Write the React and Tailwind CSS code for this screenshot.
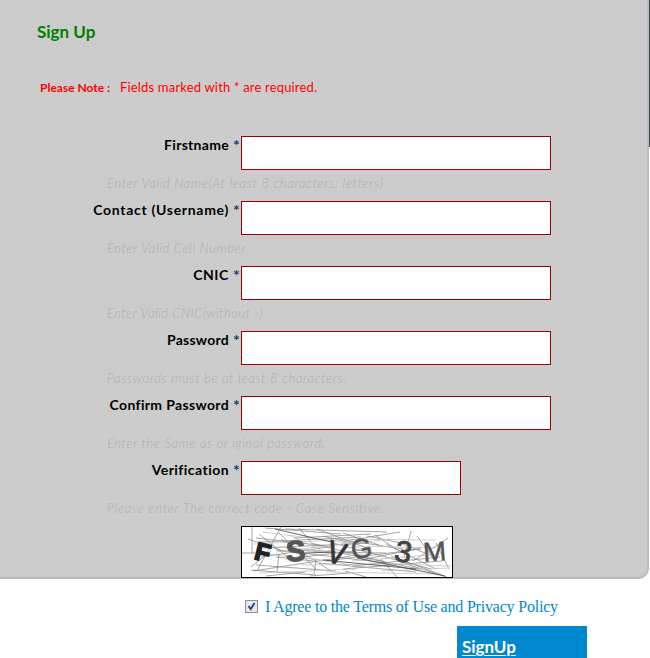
const fields = [
  { label: 'Firstname', hint: 'Enter Valid Name(At least 8 characters: letters)', lt: 'tracking-[0.3px]', ht: 'tracking-[0.64px]', w: 'w-[310px]' },
  { label: 'Contact (Username)', hint: 'Enter Valid Cell Number', lt: 'tracking-[0.7px]', ht: 'tracking-[0.6px]', w: 'w-[310px]' },
  { label: 'CNIC', hint: 'Enter Valid CNIC(without -)', lt: 'tracking-[0.6px]', ht: 'tracking-[0.47px]', w: 'w-[310px]' },
  { label: 'Password', hint: 'Passwords must be at least 8 characters.', lt: 'tracking-[0.25px]', ht: 'tracking-[0.63px]', w: 'w-[310px]' },
  { label: 'Confirm Password', hint: 'Enter the Same as or iginal password.', lt: 'tracking-[0.35px]', ht: 'tracking-[0.6px]', w: 'w-[310px]' },
  { label: 'Verification', hint: 'Please enter The correct code - Case Sensitive.', lt: 'tracking-[0.45px]', ht: 'tracking-[0.7px]', w: 'w-[220px]' },
];

function Field({ label, hint, lt, ht, w }) {
  return (
    <div className="h-[65px]">
      <div className="flex h-[34px]">
        <div className="flex w-[241px] shrink-0 justify-end text-[14px] leading-[17px] whitespace-nowrap">
          <span className={`font-bold text-black ${lt}`}>{label}</span>
          <span className="ml-[4px] w-[8px] text-[16px] leading-[17px] font-bold text-[#1d3f5e]">*</span>
        </div>
        <input className={`h-[34px] border border-[#990000] bg-white outline-none ${w}`} />
      </div>
      <p className={`ml-[107px] pt-[4px] text-[13px] leading-[18px] font-light whitespace-nowrap text-[#acacac] italic ${ht}`}>{hint}</p>
    </div>
  );
}

function Captcha() {
  return (
    <svg className="ml-[241px] block h-[52px] w-[212px] bg-white" viewBox="0 0 212 52">
      <g fill="none" stroke="#808080" strokeWidth="0.7">
        <path d="M11 1V27M0 27H14M7 13L45 26M18 8L48 32M24 2L100 8M40 1L16 45M38 7L75 43M44 3L146 6M58 2L70 16M76 3L126 22M15 12L86 20M19 16L120 11M22 22L128 17M35 24L145 37M20 31L94 20M45 33L130 23M12 45L110 30M10 44L75 49M15 39L95 45M35 31L72 35M40 13L90 45M70 17L148 37M90 12L162 23M65 25H92M72 26L145 27M92 17L190 43M95 26L178 43M85 35L180 23M78 37L175 46M102 43L201 35M112 40L199 31M126 10L165 18M134 9L158 25M145 18L195 43M157 16L184 27M150 30L201 49M170 5L163 31M176 10L193 34M207 12L172 35M195 17L208 43M165 38L206 51M140 33L156 51M104 45L125 51M69 50L110 47M75 34L73 48M38 28L36 45M82 10L110 17M102 7L138 19M110 14L159 6M53 12L130 8M120 34L180 22M10 41L30 25M25 50L64 46" />
        <path stroke="#bbb" d="M21 6L109 17L35 26M12 18L97 14M36 21L124 29M24 28L88 35M18 47L116 43M55 30L130 42M82 13L195 14M70 22L150 13M115 20L195 22M101 16L154 34M111 35L190 29M128 37L210 40M60 39L160 38M140 45L208 42M48 9L88 28M85 46L198 48" />
        <path stroke="#444" strokeWidth="0.8" d="M116 32L204 50M64 27L95 26M34 3L90 16M82 34L175 43" />
      </g>
      <g fontFamily="Liberation Sans, Arial, sans-serif">
        <text x="14" y="35" fontSize="25" fontWeight="900" fill="#222" stroke="#222" strokeWidth="1.6" transform="rotate(14 22 27)">F</text>
        <text x="45" y="35" fontSize="29" fontWeight="700" fill="#555" stroke="#555" strokeWidth="1.2" transform="rotate(-3 54 25)">S</text>
        <text x="87" y="38" fontSize="31" fill="#333" stroke="#333" strokeWidth="1.1" transform="rotate(16 97 26)" textLength="18" lengthAdjust="spacingAndGlyphs">V</text>
        <text x="110" y="32" fontSize="27" fill="#555" stroke="#555" strokeWidth="0.6" transform="rotate(-10 119 22)">G</text>
        <text x="154" y="36" fontSize="30" fill="#444" stroke="#444" strokeWidth="0.9" transform="rotate(11 162 26)">3</text>
        <text x="182" y="35" fontSize="27" fill="#555" stroke="#555" strokeWidth="0.5" transform="rotate(-4 194 25)" textLength="23" lengthAdjust="spacingAndGlyphs">M</text>
      </g>
      <rect x="0.5" y="0.5" width="211" height="51" fill="none" stroke="#000" />
    </svg>
  );
}

export default function App() {
  return (
    <div className="h-[658px] w-[650px] overflow-hidden bg-white font-['Lato','Liberation_Sans',sans-serif]">
      <div className="flex h-[579px]">
        <div className="h-[579px] w-[649px] rounded-br-[11px] border-r-2 border-b-2 border-[#bbb] bg-[#ccc]">
          <h1 className="ml-[37px] pt-[21px] text-[17px] leading-[22px] font-bold text-[#008000]">Sign Up</h1>
          <div className="mt-[35px] ml-[40px] flex h-[20px] items-center text-[#f00]">
            <b className="w-[80px] text-[12px]">Please Note :</b>
            <span className="text-[13px] tracking-[0.18px]">Fields marked with * are required.</span>
          </div>
          <form className="pt-[38px]">
            {fields.map((f) => <Field key={f.label} {...f} />)}
            <Captcha />
          </form>
        </div>
        <div className="h-[147px] w-px bg-[#35504f]" />
      </div>
      <div className="flex h-[47px] items-center pt-[9px] pl-[245px]">
        <span className="flex size-[13px] -translate-y-px items-center justify-center border border-[#8e8f8f] bg-[#e4e7ec]">
          <svg className="size-[11px]" viewBox="0 0 11 11" fill="none"><path d="M2.5 5L4.7 8L8.5 2" stroke="#334484" strokeWidth="2" /></svg>
        </span>
        <span className="ml-[7px] font-['Liberation_Serif',serif] text-[16px] leading-5 tracking-[-0.2px] whitespace-nowrap text-[#0088cc]">I Agree to the Terms of Use and Privacy Policy</span>
      </div>
      <button className="ml-[457px] flex h-[32px] w-[130px] bg-[#0088cf] pt-[10px] pl-[5px] text-[17px] leading-[22px] font-bold text-white underline underline-offset-2">SignUp</button>
    </div>
  );
}
